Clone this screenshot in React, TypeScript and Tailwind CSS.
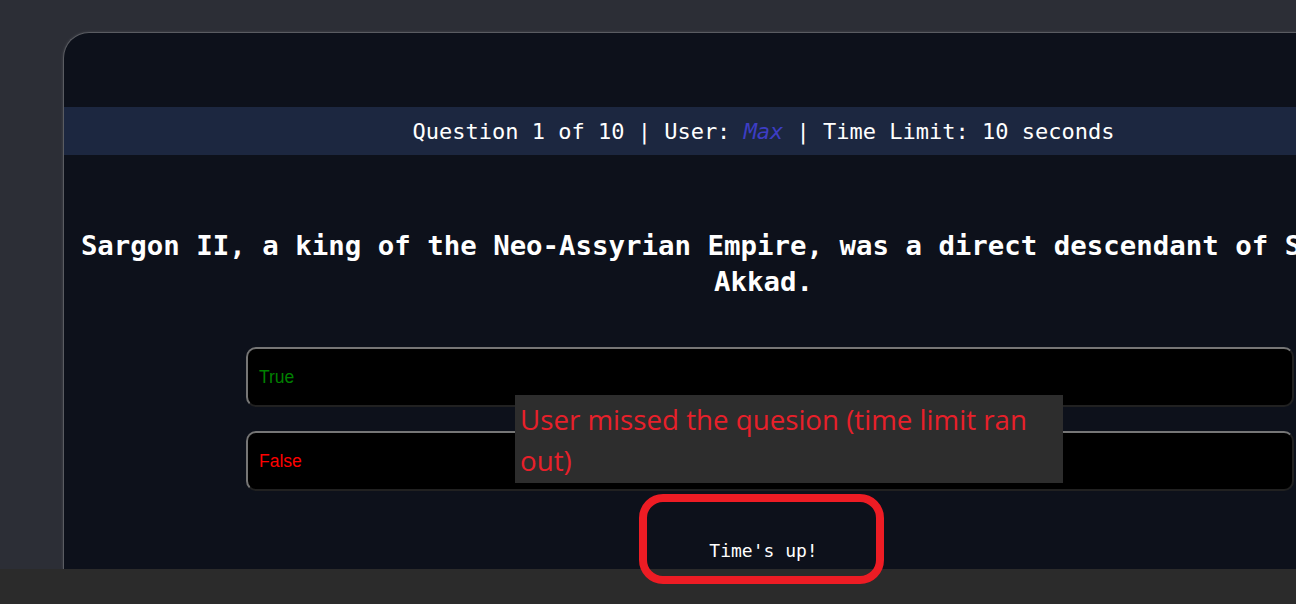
import React from 'react'

const mono = { fontFamily: '"DejaVu Sans Mono", "Liberation Mono", monospace' }

export default function App() {
  return (
    <div className="relative w-[1296px] h-[604px] overflow-hidden bg-[#2c2e36] flex flex-col">
      {/* page frame */}
      <div className="flex-1 min-h-0 pl-[63px] pt-[32px] overflow-hidden">
        <div
          className="w-[1400px] h-full rounded-tl-[26px] border-l border-t border-[#5a5c62] bg-[#0d111b] shadow-[0_0_3px_rgba(255,255,255,0.12)] pt-[74px]"
          style={mono}
        >
          <div className="h-[48px] bg-[#1c2740] flex items-center justify-center text-[22px] text-white whitespace-pre">
            Question 1 of 10 | User: <span className="italic text-[#3d3dc4]">Max</span> | Time Limit: 10 seconds
          </div>

          <h1 className="mt-[73px] px-[14px] text-center text-[27.4px] leading-[36px] font-bold text-white">
            <span className="mr-[13px]">
              Sargon II, a king of the Neo-Assyrian Empire, was a direct descendant of Sargon of
            </span>
            <br />
            Akkad.
          </h1>

          <div className="mt-[47px] ml-[182px] w-[1048px] flex flex-col gap-[24px]">
            <button
              className="h-[60px] rounded-[10px] border-2 border-[#767676] bg-black px-[11px] text-left text-[17.5px] text-[#008000]"
              style={{ borderStyle: 'outset', fontFamily: '"Liberation Sans", Arial, sans-serif' }}
            >
              True
            </button>
            <button
              className="h-[60px] rounded-[10px] border-2 border-[#767676] bg-black px-[11px] text-left text-[17.5px] text-[#ff0000]"
              style={{ borderStyle: 'outset', fontFamily: '"Liberation Sans", Arial, sans-serif' }}
            >
              False
            </button>
          </div>

          <p className="mt-[46px] text-center text-[18px] text-white">Time's up!</p>
        </div>
      </div>
      <div className="h-[35px] shrink-0 bg-[#2b2b2b]" />

      {/* annotations */}
      <div
        className="absolute left-[515px] top-[395px] w-[548px] h-[88px] bg-[#2d2d2d] px-[5px] pt-[4px] text-[27.7px] leading-[41px] text-[#e8202a]"
        style={{ fontFamily: '"Open Sans", "Noto Sans", sans-serif' }}
      >
        User missed the quesion (time limit ran out)
      </div>
      <div className="absolute left-[639px] top-[494px] w-[245px] h-[90px] rounded-[24px] border-[8px] border-[#ed1c24]" />
    </div>
  )
}
